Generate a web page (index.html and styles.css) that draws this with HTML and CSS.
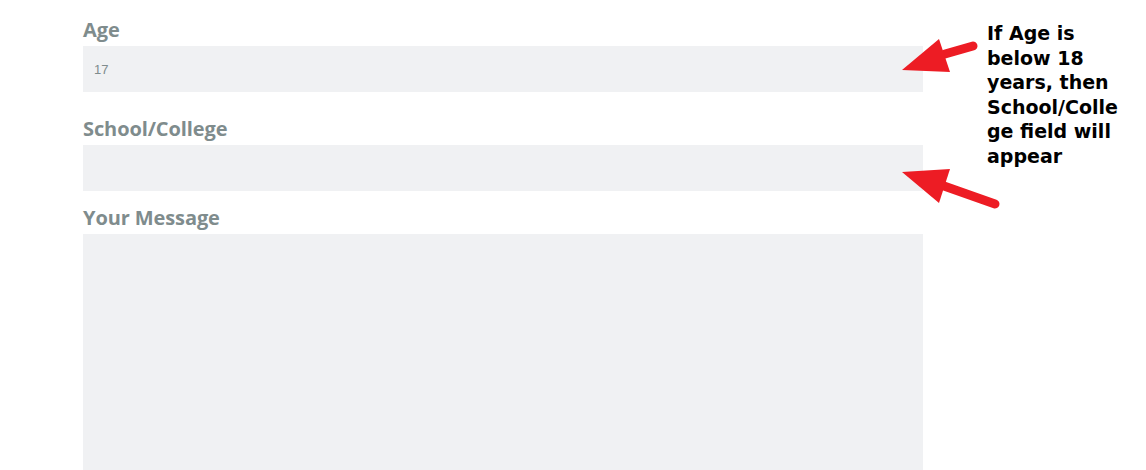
FILE: index.html
```html
<!DOCTYPE html>
<html>
<head>
<meta charset="utf-8">
<link rel="stylesheet" href="styles.css">
</head>
<body>
<div class="page">
  <form class="form">
    <div class="field">
      <label class="label">Age</label>
      <div class="input">17</div>
    </div>
    <div class="field">
      <label class="label">School/College</label>
      <div class="input"></div>
    </div>
    <div class="field">
      <label class="label">Your Message</label>
      <div class="textarea"></div>
    </div>
  </form>
  <div class="note">If Age is<br>below 18<br>years, then<br>School/Colle<br>ge field will<br>appear</div>
  <svg class="arrows" width="1146" height="470" viewBox="0 0 1146 470">
    <line x1="945" y1="54" x2="973" y2="46" stroke="#ed1c24" stroke-width="9" stroke-linecap="round"/>
    <polygon points="902,70 939,39 950,72" fill="#ed1c24"/>
    <line x1="944" y1="186" x2="995" y2="204" stroke="#ed1c24" stroke-width="9" stroke-linecap="round"/>
    <polygon points="902,172 950,169 939,203" fill="#ed1c24"/>
  </svg>
</div>
</body>
</html>
```
FILE: styles.css
```css
html, body { margin: 0; padding: 0; background: #fff; }
.page { position: relative; width: 1146px; height: 470px; overflow: hidden; }
.form { padding: 18px 0 0 83px; width: 840px; display: flex; flex-direction: column; }
.field { display: flex; flex-direction: column; }
.label {
  font-family: "Open Sans", Lato, sans-serif;
  font-weight: 700;
  font-size: 20px;
  line-height: 24px;
  color: #7f8c8d;
  margin-bottom: 4px;
  letter-spacing: -0.1px;
}
.input {
  height: 46px;
  background: #f0f1f3;
  margin-bottom: 25px;
  box-sizing: border-box;
  padding: 0 11px;
  font-family: "Liberation Sans", Arial, sans-serif;
  font-size: 13px;
  line-height: 48px;
  color: #7f8c8d;
}
.field:nth-child(2) .input { margin-bottom: 15px; }
.textarea { height: 260px; background: #f0f1f3; }
.note {
  position: absolute;
  left: 987px;
  top: 21px;
  font-family: "DejaVu Sans", Verdana, sans-serif;
  font-weight: 700;
  font-size: 19px;
  line-height: 24.6px;
  color: #000;
  white-space: nowrap;
}
.arrows { position: absolute; left: 0; top: 0; pointer-events: none; }
```
